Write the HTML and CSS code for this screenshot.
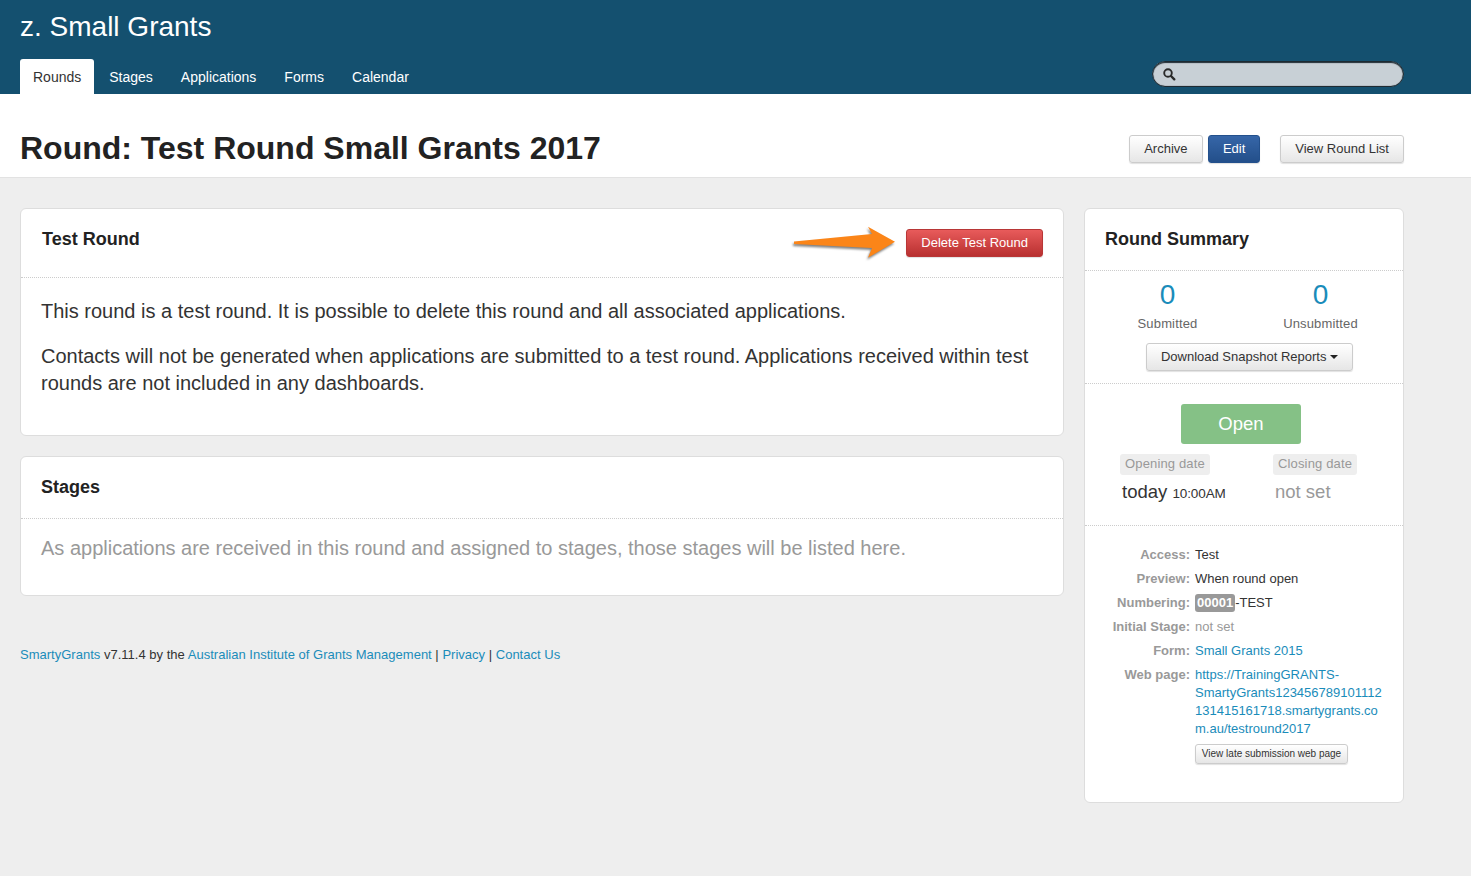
FILE: index.html
```html
<!DOCTYPE html>
<html lang="en">
<head>
<meta charset="utf-8">
<title>Round: Test Round Small Grants 2017</title>
<link rel="stylesheet" href="styles.css">
</head>
<body>
<header class="topbar">
  <div class="brand">z. Small Grants</div>
  <div class="navrow">
    <nav class="tabs">
      <a class="tab active">Rounds</a>
      <a class="tab">Stages</a>
      <a class="tab">Applications</a>
      <a class="tab">Forms</a>
      <a class="tab">Calendar</a>
    </nav>
    <div class="search">
      <svg class="search-icon" width="13" height="13" viewBox="0 0 13 13"><circle cx="5" cy="5" r="3.800" fill="none" stroke="#2a2a2a" stroke-width="1.900"/><path d="M8 8l3.300 3.300" stroke="#2a2a2a" stroke-width="2.400" stroke-linecap="round"/></svg>
    </div>
  </div>
</header>
<section class="titlebar">
  <h1>Round: Test Round Small Grants 2017</h1>
  <div class="actions">
    <a class="btn btn-archive">Archive</a>
    <a class="btn btn-blue">Edit</a>
    <a class="btn btn-list">View Round List</a>
  </div>
</section>
<main class="content">
  <div class="leftcol">
    <section class="card">
      <div class="card-head head-test">
        <h2>Test Round</h2>
        <div class="head-side">
          <svg class="arrow" width="108" height="38" viewBox="0 0 108 38"><path d="M3 17.600L81 10 77 2.700 104 17.700 77 33.700 81 24 3 20Z" fill="#fb8518"/></svg>
          <a class="btn btn-red">Delete Test Round</a>
        </div>
      </div>
      <div class="card-body body-test">
        <p>This round is a test round. It is possible to delete this round and all associated applications.</p>
        <p>Contacts will not be generated when applications are submitted to a test round. Applications received within test rounds are not included in any dashboards.</p>
      </div>
    </section>
    <section class="card">
      <div class="card-head head-stages"><h2>Stages</h2></div>
      <div class="card-body body-stages">
        <p class="muted">As applications are received in this round and assigned to stages, those stages will be listed here.</p>
      </div>
    </section>
    <footer class="foot"><a>SmartyGrants</a> v7.11.4 by the <a>Australian Institute of Grants Management</a> | <a>Privacy</a> | <a>Contact Us</a></footer>
  </div>
  <aside class="card side">
    <div class="side-head"><h2>Round Summary</h2></div>
    <div class="side-stats">
      <div class="stats">
        <div class="stat"><a class="num">0</a><span>Submitted</span></div>
        <div class="stat"><a class="num">0</a><span>Unsubmitted</span></div>
      </div>
      <a class="btn btn-snap">Download Snapshot Reports <i class="caret"></i></a>
    </div>
    <div class="side-status">
      <div class="open">Open</div>
      <div class="dates">
        <div class="date date-open"><span class="date-label">Opening date</span><div class="date-val">today <small>10:00AM</small></div></div>
        <div class="date date-close"><span class="date-label">Closing date</span><div class="date-val unset">not set</div></div>
      </div>
    </div>
    <dl class="facts">
      <dt>Access:</dt><dd>Test</dd>
      <dt>Preview:</dt><dd>When round open</dd>
      <dt>Numbering:</dt><dd><span class="badge">00001</span>-TEST</dd>
      <dt>Initial Stage:</dt><dd class="faint">not set</dd>
      <dt>Form:</dt><dd><a>Small Grants 2015</a></dd>
      <dt>Web page:</dt>
      <dd class="web"><a class="weblink">https://TrainingGRANTS-SmartyGrants123456789101112131415161718.smartygrants.com.au/testround2017</a><a class="btn btn-mini">View late submission web page</a></dd>
    </dl>
  </aside>
</main>
</body>
</html>
```

FILE: styles.css
```css
* { box-sizing: border-box; }
html, body { margin: 0; padding: 0; }
body {
  min-height: 876px;
  background: #eee;
  color: #333;
  font-family: "Liberation Sans", Arial, sans-serif;
  font-size: 13px;
  line-height: 20px;
}
a { color: #1a8cba; }

.topbar { height: 94px; background: #14506f; padding: 0 67px 0 20px; display: flex; flex-direction: column; }
.brand { color: #fff; font-size: 28px; line-height: 32px; padding-top: 11px; height: 59px; }
.navrow { display: flex; justify-content: space-between; align-items: flex-start; height: 35px; }
.tabs { display: flex; gap: 2px; }
.tab { color: #fff; font-size: 14px; height: 35px; padding: 8px 13px 0; line-height: 20px; border-radius: 3px 3px 0 0; }
.tab.active { background: #fff; color: #333; }
.search { width: 252px; height: 26px; margin-top: 2px; background: #c8d0d6; border: 1px solid #1d2a32; box-shadow: inset 0 1px 1px #222e36, inset 0 0 1px #222e36; border-radius: 13px; padding: 6px 0 0 10px; display: flex; }

.titlebar { height: 84px; background: #fff; border-bottom: 1px solid #e2e2e2; padding: 0 67px 0 20px; display: flex; justify-content: space-between; align-items: flex-start; }
h1 { margin: 0; padding-top: 34px; font-size: 32px; line-height: 40px; font-weight: bold; color: #222; }
.actions { display: flex; margin-top: 41px; gap: 5px; }
.btn { display: inline-block; height: 28px; padding: 3px 14px; line-height: 20px; font-size: 13px; color: #333; border: 1px solid #ccc; border-radius: 3px; background: linear-gradient(#fff, #e6e6e6); box-shadow: 0 1px 1px rgba(0,0,0,.12); text-align: center; white-space: nowrap; }
.btn-archive { width: 74px; padding-left: 0; padding-right: 0; }
.btn-blue { background: linear-gradient(#3666a8, #234f8a); border-color: #23508c; color: #fff; }
.btn-list { margin-left: 15px; }
.btn-red { background: linear-gradient(#e85b5b, #b83030); border-color: #b83636; color: #fff; }

.content { display: flex; align-items: flex-start; gap: 20px; padding: 30px 67px 0 20px; }
.leftcol { width: 1044px; display: flex; flex-direction: column; gap: 20px; }
.card { background: #fff; border: 1px solid #ddd; border-radius: 6px; }
h2 { margin: 0; font-size: 18px; line-height: 22px; font-weight: bold; color: #222; }
.card-head { border-bottom: 1px dotted #ccc; padding: 0 20px; }
.head-test { height: 69px; display: flex; justify-content: space-between; align-items: flex-start; padding-top: 19px; padding-left: 21px; }
.head-side { display: flex; align-items: flex-start; margin-top: 1px; gap: 7px; }
.arrow { margin-top: -5px; filter: drop-shadow(-1px 2px 1px rgba(0,0,0,.5)); }
.head-stages { height: 62px; padding-top: 19px; }
.card-body p { margin: 0 0 10px; font-size: 20px; line-height: 27px; }
.card-body { padding: 0 20px; }
.body-test { padding-top: 20px; height: 157px; }
.body-test p + p { margin-top: 18px; }
.body-stages { padding-top: 16px; height: 76px; }
.muted { color: #999; }
.foot { margin-top: 29px; letter-spacing: .012px; }

.side { width: 320px; height: 595px; }
.side-head { height: 62px; padding: 19px 20px 0; border-bottom: 1px dotted #ccc; }
.side-stats { height: 113px; border-bottom: 1px dotted #ccc; display: flex; flex-direction: column; align-items: center; }
.stats { align-self: stretch; display: flex; padding: 7px 0 0 6px; }
.stat { width: 153px; display: flex; flex-direction: column; align-items: center; color: #666; }
.stat .num { font-size: 28px; line-height: 34px; }
.stat span { line-height: 20px; margin-top: 2px; letter-spacing: .15px; }
.btn-snap { margin: 9px 0 0 11px; width: 207px; padding: 3px 0; }
.caret { display: inline-block; width: 0; height: 0; border: 4px solid transparent; border-top-color: #222; border-bottom: 0; vertical-align: 2px; }
.side-status { height: 142px; border-bottom: 1px dotted #ccc; padding-top: 20px; }
.open { width: 120px; height: 40px; margin-left: 96px; background: #85c186; border-radius: 3px; color: #fff; font-size: 18.500px; line-height: 40px; text-align: center; }
.dates { display: flex; padding: 10px 0 0 35px; }
.date { display: flex; flex-direction: column; align-items: flex-start; }
.date-open { width: 153px; }
.date-label { background: #eee; color: #999; border-radius: 3px; padding: 0 5px 1px; line-height: 20px; letter-spacing: .15px; }
.date-val { font-size: 18.500px; line-height: 24px; margin: 5px 0 0 2px; color: #333; }
.date-val small { font-size: 13.500px; letter-spacing: -.1px; }
.date-val.unset { color: #999; }
.facts { margin: 0; padding: 20px 20px 0 0; display: grid; grid-template-columns: 105px 1fr; column-gap: 5px; row-gap: 6px; align-content: start; }
dt { text-align: right; font-weight: bold; color: #999; line-height: 18px; white-space: nowrap; }
dd { margin: 0; line-height: 18px; color: #333; min-width: 0; }
dd.faint { color: #999; }
.badge { background: #999; color: #fff; font-weight: bold; border-radius: 3px; padding: 0 2px; display: inline-block; }
.weblink { display: block; overflow-wrap: anywhere; }
.btn-mini { display: block; width: 153px; height: 20px; margin-top: 6px; padding: 0; font-size: 10px; line-height: 18px; }
```
